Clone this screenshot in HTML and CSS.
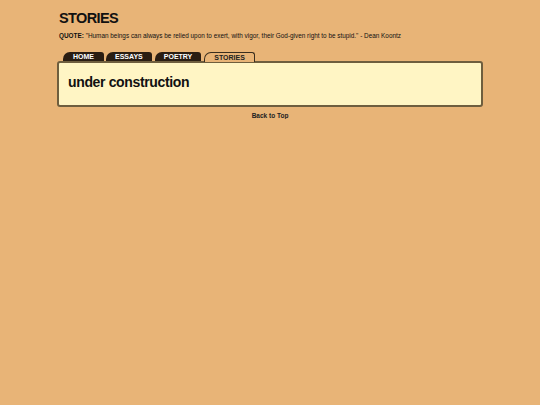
FILE: index.html
```html
<!DOCTYPE html>
<html>
<head>
<meta charset="utf-8">
<link rel="stylesheet" href="styles.css">
</head>
<body>
<div class="page">
  <h1 class="title">STORIES</h1>
  <p class="quote"><b>QUOTE:</b> "Human beings can always be relied upon to exert, with vigor, their God-given right to be stupid." - Dean Koontz</p>
  <ul class="tabs">
    <li class="tab tab-home">HOME</li>
    <li class="tab">ESSAYS</li>
    <li class="tab">POETRY</li>
    <li class="tab active">STORIES</li>
  </ul>
  <div class="box">
    <h2 class="heading">under construction</h2>
  </div>
  <p class="back"><a href="#">Back to Top</a></p>
</div>
</body>
</html>
```
FILE: styles.css
```css
html, body {
  margin: 0;
  padding: 0;
  background: #e8b477;
  font-family: "Liberation Sans", Arial, sans-serif;
  color: #111;
}
.page {
  width: 426px;
  margin: 0 auto;
  padding-top: 10px;
}
.title {
  margin: 0 0 0 2px;
  font-size: 14.5px;
  letter-spacing: -0.6px;
  line-height: 16px;
  font-weight: bold;
}
.quote {
  margin: 5px 0 0 2px;
  font-size: 6.4px;
  line-height: 9px;
}
.tabs {
  list-style: none;
  margin: 11px 0 0 6px;
  padding: 0;
  display: flex;
  gap: 3px;
  align-items: flex-end;
}
.tab {
  background: #2a1d12;
  color: #fff;
  font-size: 7px;
  font-weight: bold;
  height: 9px;
  line-height: 10px;
  padding: 0 9px;
  border-radius: 7px 3px 0 0;
  text-align: center;
}
.tab-home {
  min-width: 23px;
  margin-right: -1px;
}
.tab.active {
  background: #e8b477;
  color: #222;
  border: 1px solid #3a2e1e;
  border-bottom: none;
  height: 9px;
  position: relative;
  top: 1px;
}
.box {
  background: #fff5c4;
  border: 2px solid #6e5e3e;
  border-radius: 3px;
  height: 42px;
  padding: 0 9px;
}
.heading {
  margin: 11px 0 0 0;
  font-size: 14px;
  letter-spacing: -0.35px;
  line-height: 17px;
  font-weight: bold;
}
.back {
  margin: 5px 0 0 0;
  text-align: center;
  font-size: 6.5px;
  font-weight: bold;
}
.back a {
  color: #222;
}
```
